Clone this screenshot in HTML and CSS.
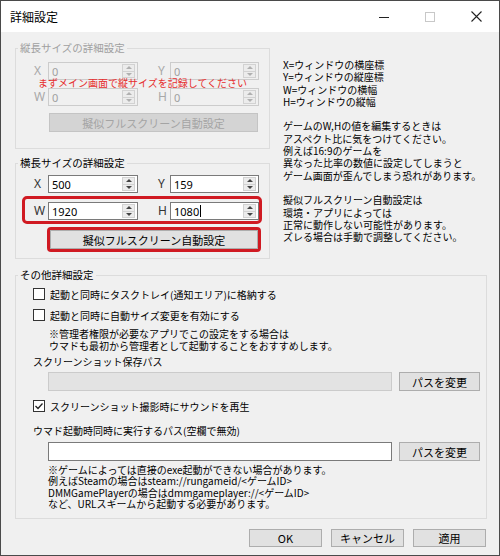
FILE: index.html
```html
<!DOCTYPE html>
<html lang="ja">
<head>
    <meta charset="UTF-8">
    <title>詳細設定</title>
    <link rel="stylesheet" href="styles.css">
</head>
<body>
    <div class="window">
        <div class="titlebar">
            <span class="title">詳細設定</span>
            <div class="caps">
                <div class="cap"><svg width="10" height="10" viewBox="0 0 10 10"><path d="M0 5.5h10" stroke="#222" stroke-width="1"/></svg></div>
                <div class="cap"><svg width="10" height="10" viewBox="0 0 10 10"><rect x="0.5" y="0.5" width="9" height="9" fill="none" stroke="#c8c8c8"/></svg></div>
                <div class="cap"><svg width="11" height="11" viewBox="0 0 11 11"><path d="M0.5 0.5l10 10M10.5 0.5l-10 10" stroke="#222" stroke-width="1.1"/></svg></div>
            </div>
        </div>

        <div class="content">
            <div class="top">
                <div class="left">
                    <fieldset class="group g1 off">
                        <legend>縦長サイズの詳細設定</legend>
                        <div class="gbody">
                            <div class="grow">
                                <span class="lbl">X</span>
                                <div class="num"><span class="val">0</span><div class="spin"><i class="up"></i><i class="dn"></i></div></div>
                                <span></span>
                                <span class="lbl">Y</span>
                                <div class="num"><span class="val">0</span><div class="spin"><i class="up"></i><i class="dn"></i></div></div>
                            </div>
                            <div class="grow">
                                <span class="lbl">W</span>
                                <div class="num"><span class="val">0</span><div class="spin"><i class="up"></i><i class="dn"></i></div></div>
                                <span></span>
                                <span class="lbl">H</span>
                                <div class="num"><span class="val">0</span><div class="spin"><i class="up"></i><i class="dn"></i></div></div>
                            </div>
                            <button class="btn wide" disabled>擬似フルスクリーン自動設定</button>
                            <div class="warn">まずメイン画面で縦サイズを記録してください</div>
                        </div>
                    </fieldset>

                    <fieldset class="group g2">
                        <legend>横長サイズの詳細設定</legend>
                        <div class="gbody">
                            <div class="grow">
                                <span class="lbl">X</span>
                                <div class="num"><span class="val">500</span><div class="spin"><i class="up"></i><i class="dn"></i></div></div>
                                <span></span>
                                <span class="lbl">Y</span>
                                <div class="num"><span class="val">159</span><div class="spin"><i class="up"></i><i class="dn"></i></div></div>
                            </div>
                            <div class="grow hl">
                                <span class="lbl">W</span>
                                <div class="num"><span class="val">1920</span><div class="spin"><i class="up"></i><i class="dn"></i></div></div>
                                <span></span>
                                <span class="lbl">H</span>
                                <div class="num"><span class="val">1080<span class="caret"></span></span><div class="spin"><i class="up"></i><i class="dn"></i></div></div>
                            </div>
                            <div class="hlbtn">
                                <button class="btn">擬似フルスクリーン自動設定</button>
                            </div>
                        </div>
                    </fieldset>
                </div>

                <div class="help">
                    <p>X=ウィンドウの横座標<br>Y=ウィンドウの縦座標<br>W=ウィンドウの横幅<br>H=ウィンドウの縦幅</p>
                    <p>ゲームのW,Hの値を編集するときは<br>アスペクト比に気をつけてください。<br>例えば16:9のゲームを<br>異なった比率の数値に設定してしまうと<br>ゲーム画面が歪んでしまう恐れがあります。</p>
                    <p>擬似フルスクリーン自動設定は<br>環境・アプリによっては<br>正常に動作しない可能性があります。<br>ズレる場合は手動で調整してください。</p>
                </div>
            </div>

            <fieldset class="group g3">
                <legend>その他詳細設定</legend>
                <div class="gbody">
                    <div class="cb"><span class="box"></span>起動と同時にタスクトレイ(通知エリア)に格納する</div>
                    <div class="cb"><span class="box"></span>起動と同時に自動サイズ変更を有効にする</div>
                    <div class="note">※管理者権限が必要なアプリでこの設定をする場合は<br>ウマドも最初から管理者として起動することをおすすめします。</div>
                    <div class="plabel">スクリーンショット保存パス</div>
                    <div class="prow">
                        <div class="path ro"></div>
                        <button class="btn pbtn">パスを変更</button>
                    </div>
                    <div class="cb cb3"><span class="box"><svg width="10" height="10" viewBox="0 0 10 10"><path d="M1.5 5l2.5 2.5 4.5-5" fill="none" stroke="#222" stroke-width="1.3"/></svg></span>スクリーンショット撮影時にサウンドを再生</div>
                    <div class="plabel pl2">ウマド起動時同時に実行するパス(空欄で無効)</div>
                    <div class="prow pr2">
                        <div class="path"></div>
                        <button class="btn pbtn">パスを変更</button>
                    </div>
                    <div class="note n2">※ゲームによっては直接のexe起動ができない場合があります。<br>例えばSteamの場合はsteam://rungameid/&lt;ゲームID&gt;<br>DMMGamePlayerの場合はdmmgameplayer://&lt;ゲームID&gt;<br>など、URLスキームから起動する必要があります。</div>
                </div>
            </fieldset>

            <div class="footer">
                <button class="btn fbtn">OK</button>
                <button class="btn fbtn">キャンセル</button>
                <button class="btn fbtn">適用</button>
            </div>
        </div>
    </div>
</body>
</html>
```

FILE: styles.css
```css
* {
    box-sizing: border-box;
}

body {
    margin: 0;
    background: #fff;
    font-family: "Noto Sans CJK JP", "Noto Sans", sans-serif;
    font-size: 10px;
    color: #000;
}

.window {
    width: 500px;
    height: 556px;
    border: 1px solid #4a4a4a;
    background: #f0f0f0;
    display: flex;
    flex-direction: column;
}

/* title bar */
.titlebar {
    height: 31px;
    background: #fff;
    display: flex;
    align-items: center;
    padding-left: 9px;
}

.title {
    flex: 1;
    font-size: 12px;
}

.caps {
    display: flex;
}

.cap {
    width: 46px;
    height: 31px;
    display: flex;
    align-items: center;
    justify-content: center;
}

.content {
    padding: 10px 12px 0 14px;
}

.top {
    display: flex;
}

.left {
    width: 255px;
    flex: none;
}

.help {
    margin-left: 13px;
    padding-top: 17px;
    line-height: 12.3px;
    white-space: nowrap;
}

.help p {
    margin: 0 0 12.3px;
}

/* group boxes */
.group {
    margin: 0;
    padding: 0;
    border: 1px solid #dcdcdc;
    min-width: 0;
}

.group legend {
    margin-left: 2px;
    padding: 0 2px;
    font-size: 10.5px;
    line-height: 12px;
}

.gbody {
    position: relative;
}

.g1 .gbody {
    padding: 8px 10px 16px 18px;
}

.g2 {
    margin-top: 8px;
}

.g2 .gbody {
    padding: 6px 10px 6px 18px;
}

.off legend {
    color: #a0a0a0;
}

.grow {
    display: grid;
    grid-template-columns: 14px 90px 20px 12px 89px;
    align-items: center;
    height: 18px;
}

.grow + .grow {
    margin-top: 8px;
}

.lbl {
    font-family: "Noto Sans", sans-serif;
    font-size: 12px;
    line-height: 18px;
    color: #333;
}

.num {
    height: 18px;
    border: 1px solid #7a7a7a;
    background: #fff;
    display: flex;
    align-items: center;
    padding-left: 3px;
    font-family: "Noto Sans", sans-serif;
    font-size: 11px;
}

.val {
    flex: 1;
    display: flex;
    align-items: center;
}

.caret {
    width: 1px;
    height: 12px;
    background: #000;
    margin-left: 1px;
}

.spin {
    width: 13px;
    height: 14px;
    margin-right: 2px;
    border: 1px solid #d2d2d2;
    background: #ececec;
    display: flex;
    flex-direction: column;
}

.spin i {
    flex: 1;
    display: flex;
    align-items: center;
    justify-content: center;
}

.spin i::before {
    content: "";
    border-left: 3px solid transparent;
    border-right: 3px solid transparent;
}

.spin .up {
    border-bottom: 1px solid #d2d2d2;
}

.spin .up::before {
    border-bottom: 3px solid #444;
}

.spin .dn::before {
    border-top: 3px solid #444;
}

.off .lbl {
    color: #a8a8a8;
}

.off .num {
    border-color: #cccccc;
    background: #f0f0f0;
    color: #a0a0a0;
}

.off .spin .up::before {
    border-bottom-color: #b0b0b0;
}

.off .spin .dn::before {
    border-top-color: #b0b0b0;
}

.warn {
    position: absolute;
    left: 22px;
    top: 23px;
    line-height: 12px;
    font-size: 10px;
    color: #e62e2e;
    white-space: nowrap;
}

/* buttons */
.btn {
    font-family: inherit;
    font-size: 11px;
    background: #e1e1e1;
    border: 1px solid #adadad;
    color: #000;
    padding: 0;
    height: 19px;
}

.btn:disabled {
    background: #d4d4d4;
    border-color: #c4c4c4;
    color: #a4a4a4;
}

.wide {
    display: block;
    margin: 7px 0 0 15px;
    width: 209px;
}

/* red highlights */
.grow.hl {
    margin: 3px -3px 0 -12px;
    height: auto;
    border: 3px solid #d01a22;
    border-radius: 5px;
    padding: 3px 0 1px 9px;
}

.hlbtn {
    margin: 3px 0 0 13px;
    width: 214px;
    border: 3px solid #d01a22;
    border-radius: 4px;
}

.hlbtn .btn {
    display: block;
    width: 100%;
}

/* other settings */
.g3 {
    margin-top: 10px;
}

.g3 .gbody {
    padding: 6px 6px 9px 17px;
}

.cb {
    display: flex;
    align-items: center;
    gap: 5px;
    height: 14px;
}

.cb + .cb {
    margin-top: 7px;
}

.box {
    width: 12px;
    height: 12px;
    border: 1px solid #333;
    background: #fff;
    display: flex;
    align-items: center;
    justify-content: center;
}

.note {
    margin: 6px 0 0 16px;
    line-height: 11.5px;
}

.plabel {
    margin-top: 5px;
    line-height: 12px;
}

.prow {
    display: flex;
    gap: 7px;
    margin-top: 4px;
    padding-left: 15px;
}

.path {
    width: 344px;
    height: 19px;
    border: 1px solid #7a7a7a;
    background: #fff;
}

.path.ro {
    background: #e3e3e3;
    border-color: #cbcbcb;
}

.pbtn {
    width: 81px;
}

.cb3 {
    margin-top: 8px;
}

.pl2 {
    margin-top: 12px;
}

.pr2 {
    margin-top: 5px;
}

.note.n2 {
    margin: 3px 0 0 15px;
    line-height: 11.3px;
}

.footer {
    display: flex;
    justify-content: flex-end;
    gap: 9px;
    padding: 10px 1px 0 0;
}

.fbtn {
    width: 73px;
    height: 18px;
}
```
